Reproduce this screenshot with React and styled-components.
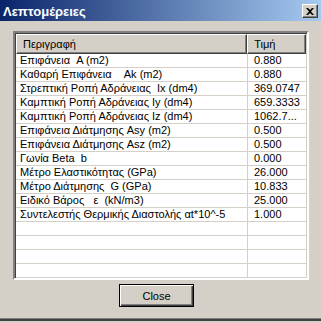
import React from "react";
import styled, { createGlobalStyle } from "styled-components";

const GlobalStyle = createGlobalStyle`
  html, body {
    margin: 0;
    padding: 0;
    background: #d4d0c8;
  }
  body {
    font-family: "Liberation Sans", Arial, sans-serif;
    font-size: 11px;
  }
`;

const rows = [
  ["Επιφάνεια  A (m2)", "0.880"],
  ["Καθαρή Επιφάνεια    Ak (m2)", "0.880"],
  ["Στρεπτική Ροπή Αδράνειας  Ix (dm4)", "369.0747"],
  ["Καμπτική Ροπή Αδράνειας Iy (dm4)", "659.3333"],
  ["Καμπτική Ροπή Αδράνειας Iz (dm4)", "1062.7..."],
  ["Επιφάνεια Διάτμησης Asy (m2)", "0.500"],
  ["Επιφάνεια Διάτμησης Asz (m2)", "0.500"],
  ["Γωνία Beta  b", "0.000"],
  ["Μέτρο Ελαστικότητας (GPa)", "26.000"],
  ["Μέτρο Διάτμησης  G (GPa)", "10.833"],
  ["Ειδικό Βάρος   ε  (kN/m3)", "25.000"],
  ["Συντελεστής Θερμικής Διαστολής αt*10^-5", "1.000"],
  ["", ""],
  ["", ""],
  ["", ""],
  ["", ""],
];

const Dialog = styled.div`
  width: 321px;
  height: 321px;
  box-sizing: border-box;
  background: #d4d0c8;
  border-bottom: 2px solid #404040;
  box-shadow: inset 0 -1px 0 #808080;
  display: flex;
  flex-direction: column;
`;

const TitleBar = styled.div`
  height: 21px;
  flex: none;
  display: flex;
  align-items: center;
  justify-content: space-between;
  padding: 0 3px;
  background: linear-gradient(to right, #0a246a, #a6caf0);
  color: #fff;
  font-weight: bold;
  font-size: 13px;
`;

const TitleText = styled.span`
  padding-top: 1px;
`;

const CloseBox = styled.div`
  width: 16px;
  height: 14px;
  box-sizing: border-box;
  background: #d4d0c8;
  border: 1px solid;
  border-color: #fff #404040 #404040 #fff;
  box-shadow: inset -1px -1px 0 #808080;
  display: flex;
  align-items: center;
  justify-content: center;
  margin-top: 1px;
`;

const Body = styled.div`
  flex: 1;
  display: flex;
  flex-direction: column;
  align-items: center;
  padding: 10px 12px 0 13px;
`;

const ListBox = styled.div`
  flex: none;
  width: 296px;
  height: 249px;
  box-sizing: border-box;
  border: 2px solid;
  border-color: #808080 #fff #fff #808080;
  box-shadow: inset 1px 1px 0 #404040, inset -1px -1px 0 #d4d0c8;
  background: #fff;
  padding: 1px 1px 0 1px;
  overflow: hidden;
`;

const HeaderRow = styled.div`
  display: flex;
  height: 20px;
  background: #d4d0c8;
`;

const HeaderCell = styled.div`
  width: ${(p) => p.$w}px;
  height: 20px;
  box-sizing: border-box;
  border: 1px solid;
  border-color: #fff #404040 #404040 #fff;
  box-shadow: inset -1px -1px 0 #808080;
  padding: 3px 0 0 6px;
  color: #000;
  white-space: nowrap;
`;

const Row = styled.div`
  display: flex;
  height: 14px;
  box-sizing: border-box;
  border-bottom: 1px solid #d4d0c8;
`;

const Cell = styled.div`
  width: ${(p) => p.$w}px;
  flex: none;
  box-sizing: border-box;
  border-right: 1px solid #d4d0c8;
  padding-left: ${(p) => p.$pad}px;
  line-height: 13px;
  white-space: pre;
  overflow: hidden;
  color: #000;
`;

const ButtonRow = styled.div`
  display: flex;
  justify-content: center;
  padding-top: 4px;
  padding-right: 9px;
`;

const Button = styled.button`
  width: 75px;
  height: 23px;
  box-sizing: border-box;
  background: #d4d0c8;
  border: 1px solid #000;
  box-shadow: inset 1px 1px 0 #fff, inset -1px -1px 0 #404040,
    inset -2px -2px 0 #808080;
  font-family: "Liberation Sans", Arial, sans-serif;
  font-size: 11px;
  color: #000;
  padding: 0;
`;

export default function App() {
  return (
    <>
      <GlobalStyle />
      <Dialog>
        <TitleBar>
          <TitleText>Λεπτομέρειες</TitleText>
          <CloseBox>
            <svg width="8" height="7" viewBox="0 0 8 7">
              <path
                d="M0 0h2l2 2 2-2h2L5 3.5 8 7H6L4 5 2 7H0l3-3.5z"
                fill="#000"
              />
            </svg>
          </CloseBox>
        </TitleBar>
        <Body>
          <ListBox>
            <HeaderRow>
              <HeaderCell $w={232}>Περιγραφή</HeaderCell>
              <HeaderCell $w={59}>Τιμή</HeaderCell>
            </HeaderRow>
            {rows.map(([label, value], i) => (
              <Row key={i}>
                <Cell $w={232} $pad={4}>
                  {label}
                </Cell>
                <Cell $w={59} $pad={6}>
                  {value}
                </Cell>
              </Row>
            ))}
          </ListBox>
          <ButtonRow>
            <Button>Close</Button>
          </ButtonRow>
        </Body>
      </Dialog>
    </>
  );
}
